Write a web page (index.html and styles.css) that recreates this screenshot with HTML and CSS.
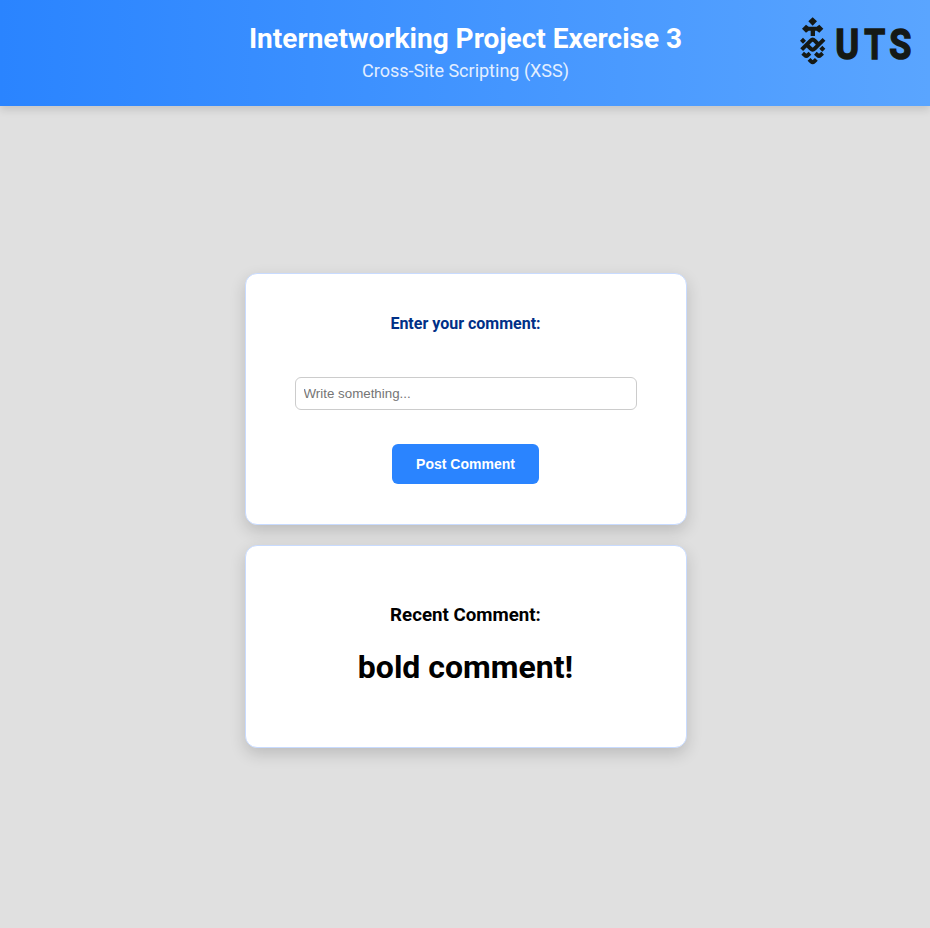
FILE: index.html
```html
<!DOCTYPE html>
<html lang="en">
<head>
<meta charset="utf-8">
<title>Internetworking Project Exercise 3</title>
<link rel="stylesheet" href="styles.css">
</head>
<body>
<header class="header">
  <h1 class="title">Internetworking Project Exercise 3</h1>
  <p class="subtitle">Cross-Site Scripting (XSS)</p>
  <svg class="logo" viewBox="0 0 420 198" role="img" aria-label="UTS">
    <path d="M68 28l13 12-13 13-13-13zM48 50l8 6h24l8-6 12 12-12 12-8-6h-5v16H62V68h-6l-8 6-12-12z"/>
    <path d="M39 89l9 9-9 9-9-9zM97 113l9 9-9 9-9-9z"/>
    <g class="weave">
      <path d="M35 125L62 98q6-6 12 0l10 10"/>
      <path d="M102 94L74 122q-6 6-12 0l-10-10"/>
      <path d="M38 136l7 6q4 4 8 0l7-6M76 136l7 6q4 4 8 0l7-6M57 154l7 7q4 4 8 0l7-7"/>
    </g>
    <g class="wordmark">
      <text transform="translate(135.500 153.500) scale(.84 1)">U</text>
      <text transform="translate(223 153.500) scale(.78 1)">T</text>
      <text transform="translate(298 153.500) scale(.83 1)">S</text>
    </g>
  </svg>
</header>
<main class="content">
  <form class="card form">
    <label class="label" for="comment">Enter your comment:</label>
    <input class="input" id="comment" type="text" placeholder="Write something...">
    <button class="button" type="button">Post Comment</button>
  </form>
  <section class="card recent">
    <h3 class="recent-title">Recent Comment:</h3>
    <h1 class="comment">bold comment!</h1>
  </section>
</main>
</body>
</html>
```
FILE: styles.css
```css
* { box-sizing: border-box; }
body {
  margin: 0;
  min-height: 928px;
  background: #e0e0e0;
  font-family: Roboto, sans-serif;
  color: #000;
}
.header {
  position: relative;
  height: 106px;
  padding-top: 22px;
  text-align: center;
  background: linear-gradient(90deg, #2a84ff, #5aa5ff);
  box-shadow: 0 4px 8px rgba(0, 0, 0, .12);
}
.title {
  margin: 0 0 0 1px;
  font-size: 28px;
  line-height: 33px;
  color: #fff;
}
.subtitle {
  margin: 5px 0 0 1px;
  font-size: 18px;
  line-height: 22px;
  color: #fff;
  opacity: .85;
}
.logo {
  position: absolute;
  top: 8px;
  right: 0;
  width: 140px;
  height: 66px;
  fill: #151915;
}
.weave { fill: none; stroke: #151915; stroke-width: 12; }
.wordmark {
  font: bold 130px Roboto, sans-serif;
  stroke: #151915;
  stroke-width: 4.5;
}
.content {
  display: flex;
  flex-direction: column;
  align-items: center;
  gap: 20px;
  padding: 167px 0 0 1px;
}
.card {
  display: flex;
  flex-direction: column;
  align-items: center;
  width: 442px;
  background: #fff;
  border: 1px solid #c8dbff;
  border-radius: 12px;
  box-shadow: 0 6px 16px rgba(0, 0, 0, .16);
}
.form { height: 252px; padding-top: 40px; }
.label {
  font-size: 16px;
  font-weight: bold;
  line-height: 20px;
  color: #003087;
}
.input {
  width: 342px;
  height: 33px;
  margin: 43px 0 34px;
  padding: 0 8px;
  border: 1px solid #ccc;
  border-radius: 6px;
  font: 13.333px "Liberation Sans", sans-serif;
}
.button {
  width: 147px;
  height: 40px;
  border: 0;
  border-radius: 6px;
  background: #2a84ff;
  color: #fff;
  font: bold 14px "Liberation Sans", sans-serif;
}
.recent { height: 203px; padding-top: 58px; }
.recent-title { margin: 0; font-size: 18.72px; line-height: 22px; }
.comment { margin: 22px 0 0; font-size: 32px; line-height: 38px; }
```
